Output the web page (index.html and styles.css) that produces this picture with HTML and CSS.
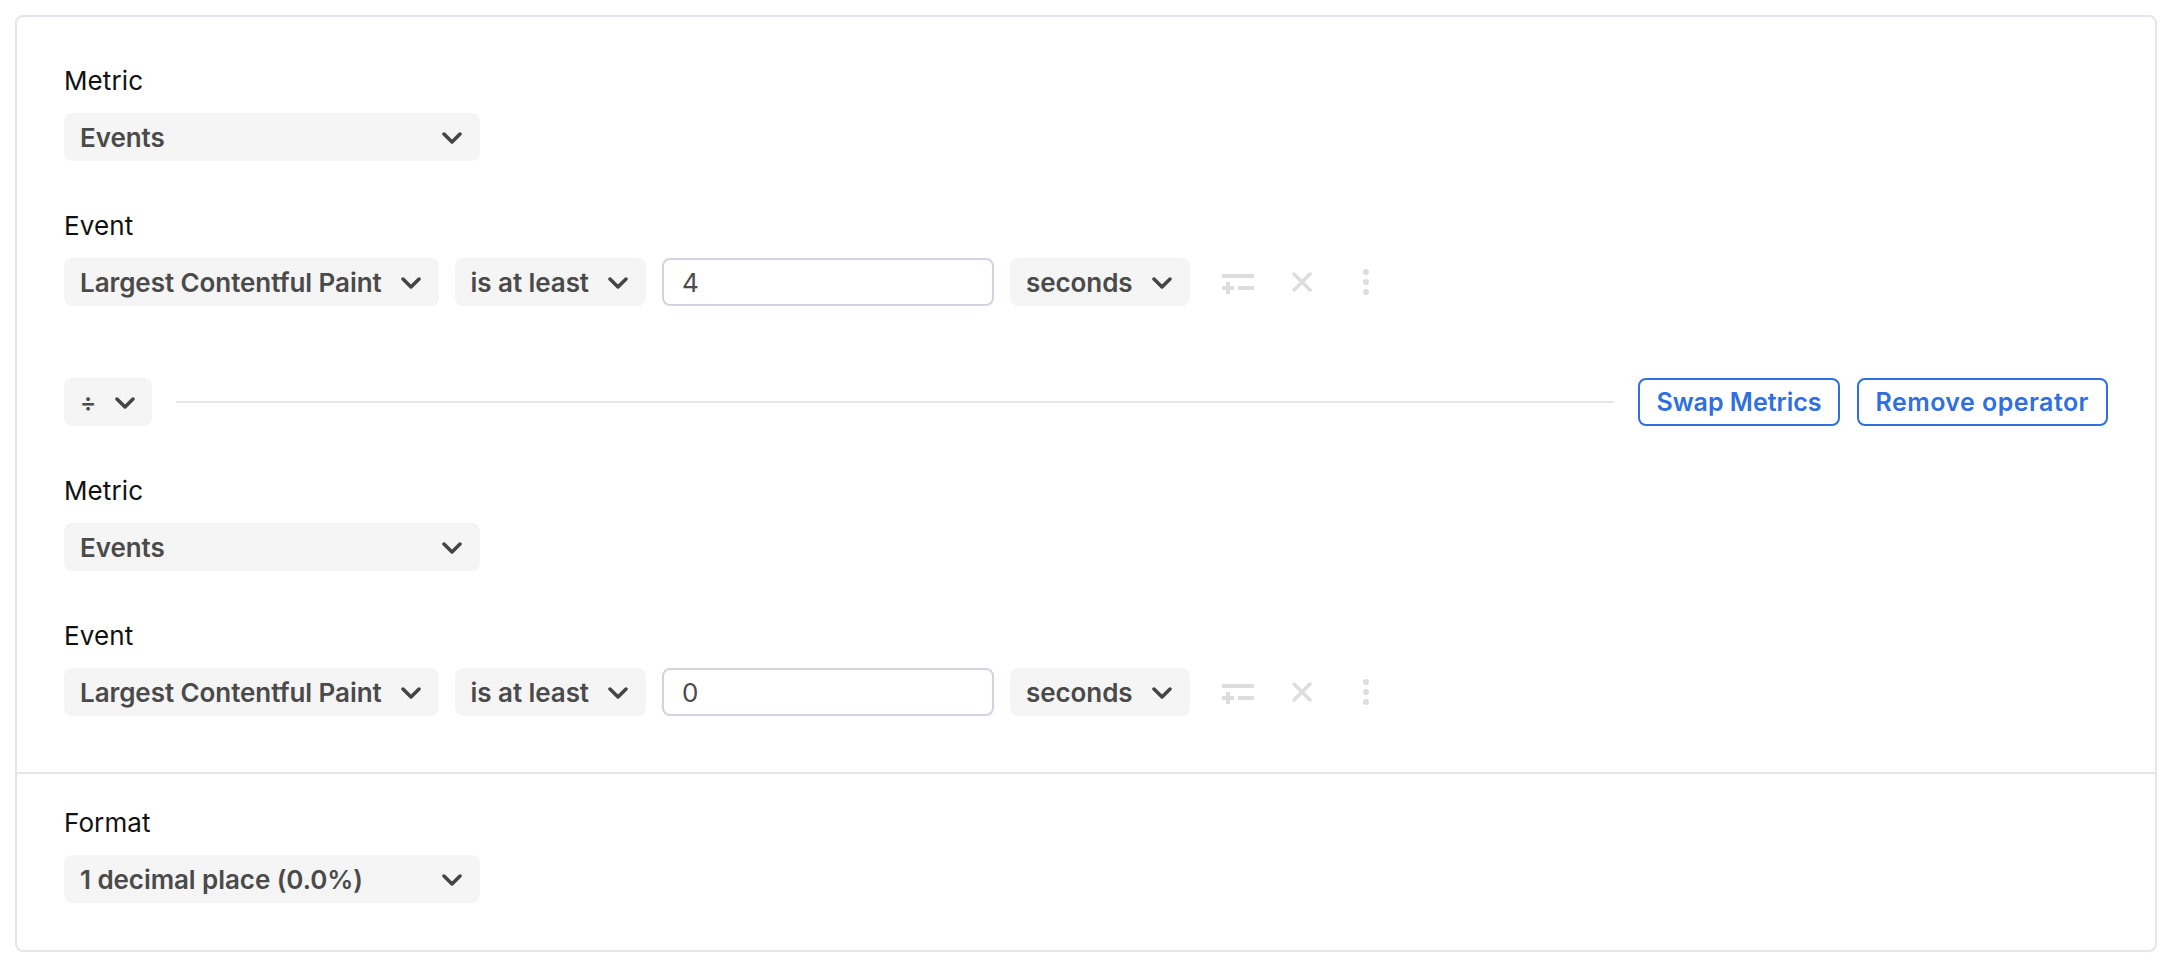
FILE: index.html
```html
<!DOCTYPE html>
<html lang="en">
<head>
<meta charset="utf-8">
<title>Metric builder</title>
<link rel="stylesheet" href="styles.css">
</head>
<body>
<svg class="defs" width="0" height="0" aria-hidden="true">
  <defs>
    <symbol id="chev" viewBox="0 0 20 12"><path d="M2 2 L10 10 L18 2" fill="none" stroke="currentColor" stroke-width="3.500" stroke-linecap="round" stroke-linejoin="round"/></symbol>
    <symbol id="ico-filter" viewBox="0 0 32 24"><path d="M0 4h32v4H0zM16 16h16v4H16zM0 16h4v-4h4v4h4v4H8v4H4v-4H0z" fill="currentColor"/></symbol>
    <symbol id="ico-x" viewBox="0 0 20 20"><path d="M2 2 L18 18 M18 2 L2 18" fill="none" stroke="currentColor" stroke-width="3.500" stroke-linecap="round"/></symbol>
    <symbol id="ico-dots" viewBox="0 0 6 26"><circle cx="3" cy="3" r="3" fill="currentColor"/><circle cx="3" cy="13" r="3" fill="currentColor"/><circle cx="3" cy="23" r="3" fill="currentColor"/></symbol>
  </defs>
</svg>
<main class="card">
  <section class="builder">
    <div class="field">
      <div class="label">Metric</div>
      <div class="select wide"><span>Events</span><svg class="chev"><use href="#chev"/></svg></div>
    </div>
    <div class="field">
      <div class="label">Event</div>
      <div class="row">
        <div class="select"><span>Largest Contentful Paint</span><svg class="chev"><use href="#chev"/></svg></div>
        <div class="select"><span>is at least</span><svg class="chev"><use href="#chev"/></svg></div>
        <div class="input">4</div>
        <div class="select"><span>seconds</span><svg class="chev"><use href="#chev"/></svg></div>
        <div class="icons">
          <svg class="i-filter"><use href="#ico-filter"/></svg>
          <svg class="i-x"><use href="#ico-x"/></svg>
          <svg class="i-dots"><use href="#ico-dots"/></svg>
        </div>
      </div>
    </div>
    <div class="operator">
      <div class="select op"><span class="div-sign">÷</span><svg class="chev"><use href="#chev"/></svg></div>
      <div class="rule"></div>
      <button class="btn swap">Swap Metrics</button>
      <button class="btn remove">Remove operator</button>
    </div>
    <div class="field">
      <div class="label">Metric</div>
      <div class="select wide"><span>Events</span><svg class="chev"><use href="#chev"/></svg></div>
    </div>
    <div class="field">
      <div class="label">Event</div>
      <div class="row">
        <div class="select"><span>Largest Contentful Paint</span><svg class="chev"><use href="#chev"/></svg></div>
        <div class="select"><span>is at least</span><svg class="chev"><use href="#chev"/></svg></div>
        <div class="input">0</div>
        <div class="select"><span>seconds</span><svg class="chev"><use href="#chev"/></svg></div>
        <div class="icons">
          <svg class="i-filter"><use href="#ico-filter"/></svg>
          <svg class="i-x"><use href="#ico-x"/></svg>
          <svg class="i-dots"><use href="#ico-dots"/></svg>
        </div>
      </div>
    </div>
  </section>
  <section class="format">
    <div class="field">
      <div class="label">Format</div>
      <div class="select wide"><span>1 decimal place (0.0%)</span><svg class="chev"><use href="#chev"/></svg></div>
    </div>
  </section>
</main>
</body>
</html>
```
FILE: styles.css
```css
* { box-sizing: border-box; }
html, body { margin: 0; padding: 0; background: #fff; }
body {
  padding: 15px;
  font-family: "Inter", "Liberation Sans", sans-serif;
  font-size: 26px;
  color: #4a4a4a;
}
.defs { position: absolute; }
.card {
  width: 2142px;
  height: 937px;
  border: 2px solid #e3e6ec;
  border-radius: 8px;
  background: #fff;
}
.builder {
  display: flex;
  flex-direction: column;
  gap: 47px;
  padding: 46px 47px 56px;
  border-bottom: 2px solid #e3e6ec;
}
.format { padding: 31px 47px; }
.label {
  height: 34px;
  line-height: 36px;
  margin-bottom: 16px;
  color: #111;
  font-weight: 400;
  letter-spacing: .1px;
}
.row { display: flex; align-items: center; gap: 16px; }
.select {
  display: inline-flex;
  align-items: center;
  gap: 19px;
  height: 48px;
  padding: 0 18px 0 16px;
  background: #f5f5f5;
  border-radius: 8px;
  font-weight: 600;
  letter-spacing: -.07px;
  color: #4a4a4a;
  white-space: nowrap;
}
.select.wide { display: flex; width: 416px; justify-content: space-between; }
.chev { width: 20px; height: 12px; margin-top: 2px; color: #444; flex: none; }
.input {
  display: flex;
  align-items: center;
  width: 332px;
  height: 48px;
  padding: 0 18px;
  border: 2px solid #d2d2e0;
  border-radius: 8px;
  background: #fff;
}
.icons { display: flex; align-items: center; margin-left: 16px; color: #dddddd; }
.i-filter { width: 32px; height: 24px; margin-right: 38px; }
.i-x { width: 20px; height: 20px; margin-right: 51px; }
.i-dots { width: 6px; height: 26px; }
.operator {
  display: flex;
  align-items: center;
  margin-top: 25px;
}
.op { justify-content: space-between; width: 88px; }
.div-sign { width: 16px; font-size: 24px; }
.rule { flex: 1; height: 2px; background: #e3e6ec; margin: 0 24px; }
.btn {
  height: 48px;
  padding: 0 17px;
  border: 2px solid #2f6fe0;
  border-radius: 8px;
  background: #fff;
  color: #2f6fe0;
  font: 600 25px "Inter", "Liberation Sans", sans-serif;
  white-space: nowrap;
}
.swap { margin-right: 17px; padding: 0 16px; }
.remove { letter-spacing: .45px; }
```
